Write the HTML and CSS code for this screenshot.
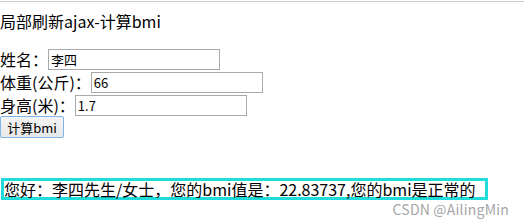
FILE: index.html
```html
<!doctype html>
<html lang="zh">
<head>
<meta charset="utf-8">
<title>局部刷新ajax-计算bmi</title>
<link rel="stylesheet" href="styles.css">
</head>
<body>

<div class="page">
	<div class="title">局部刷新ajax-计算bmi</div>

	<form class="bmi-form">
		<div class="row"><label for="name">姓名：</label><input type="text" id="name" value="李四"></div>
		<div class="row"><label for="weight">体重(公斤)：</label><input type="text" id="weight" value="66"></div>
		<div class="row"><label for="height">身高(米)：</label><input type="text" id="height" value="1.7"></div>
		<button type="button" class="calc">计算bmi</button>
	</form>

	<div class="result">您好：李四先生/女士，您的bmi值是：22.83737,您的bmi是正常的</div>

	<div class="mark">CSDN @AilingMin</div>
</div>

</body>
</html>
```

FILE: styles.css
```css
html, body {
	margin: 0;
	padding: 0;
	background: #fff;
}

body {
	font-family: "Noto Sans CJK SC", "Liberation Sans", sans-serif;
	font-size: 16px;
	color: #000;
}

.page {
	position: relative;
	height: 220px;
	margin-top: 1px;
	border-top: 1px solid #cdcdcd;
}

.title {
	margin: 9px 0 0;
	line-height: 20px;
}

.bmi-form {
	display: flex;
	flex-direction: column;
	align-items: flex-start;
	margin-top: 18px;
}

.row {
	display: flex;
	align-items: center;
	height: 21px;
	margin-bottom: 2px;
}
.row:last-of-type {
	margin-bottom: 0;
}

label {
	line-height: 21px;
}

input {
	box-sizing: border-box;
	width: 172px;
	height: 21px;
	margin: 0;
	padding: 0 2px;
	border: 1px solid #a9a9a9;
	font-family: "Noto Sans CJK SC", "Liberation Sans", sans-serif;
	font-size: 13px;
	color: #000;
	outline: none;
}

.calc {
	box-sizing: border-box;
	width: 64px;
	height: 22px;
	margin: 0;
	padding: 0;
	border: 1px solid #7eb4ea;
	border-radius: 2px;
	background: linear-gradient(#f4f4f4, #e8e8e8);
	font-family: "Noto Sans CJK SC", "Liberation Sans", sans-serif;
	font-size: 13px;
	color: #000;
}

.result {
	box-sizing: border-box;
	width: 487px;
	height: 22px;
	margin: 40px 0 0 1px;
	border: 3px solid #1edcdc;
	line-height: 16px;
	white-space: nowrap;
}

.mark {
	position: absolute;
	right: 15px;
	top: 200px;
	font-size: 14px;
	line-height: 14px;
	color: rgba(140, 140, 140, 0.8);
	letter-spacing: 0.2px;
}
```
